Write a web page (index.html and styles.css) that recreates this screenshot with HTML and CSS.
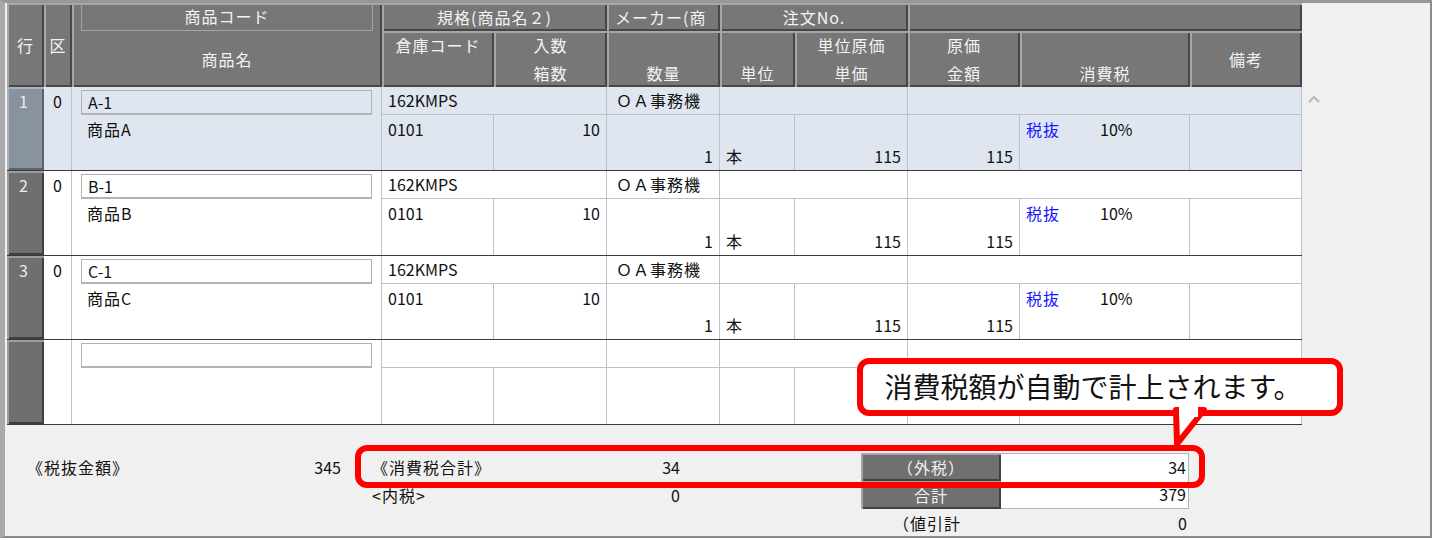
FILE: index.html
```html
<!DOCTYPE html>
<html lang="ja">
<head>
<meta charset="utf-8">
<title>売上明細</title>
<link rel="stylesheet" href="styles.css">
</head>
<body>
<div class="screen">
  <div class="frame">
    <div class="top">
      <div class="table">
        <div class="grid hdr">
          <div class="h c-gyo v-mid">行</div>
          <div class="h c-ku v-mid">区</div>
          <div class="h c-shohin"><div class="h-code">商品コード</div><div class="h-name">商品名</div></div>
          <div class="h c-kikaku">規格(商品名２)</div>
          <div class="h c-maker">メーカー(商</div>
          <div class="h c-chumon">注文No.</div>
          <div class="h c-blank"></div>
          <div class="h two"><span>倉庫コード</span><span></span></div>
          <div class="h two"><span>入数</span><span>箱数</span></div>
          <div class="h two"><span></span><span>数量</span></div>
          <div class="h two"><span></span><span>単位</span></div>
          <div class="h two"><span>単位原価</span><span>単価</span></div>
          <div class="h two"><span>原価</span><span>金額</span></div>
          <div class="h two"><span></span><span>消費税</span></div>
          <div class="h v-mid">備考</div>
        </div>

        <div class="grid row sel short">
          <div class="d-gyo">1</div>
          <div class="d-ku">0</div>
          <div class="d-shohin"><div class="code">A-1</div><div class="name">商品A</div></div>
          <div class="d sub c-kikaku">162KMPS</div>
          <div class="d sub c-maker ja">ＯＡ事務機</div>
          <div class="d sub c-chumon"></div>
          <div class="d sub c-blank"></div>
          <div class="d">0101</div>
          <div class="d right">10</div>
          <div class="d bot right">1</div>
          <div class="d bot">本</div>
          <div class="d bot right">115</div>
          <div class="d bot right">115</div>
          <div class="d tax"><span class="kb">税抜</span><span>10%</span></div>
          <div class="d"></div>
        </div>

        <div class="grid row">
          <div class="d-gyo">2</div>
          <div class="d-ku">0</div>
          <div class="d-shohin"><div class="code">B-1</div><div class="name">商品B</div></div>
          <div class="d sub c-kikaku">162KMPS</div>
          <div class="d sub c-maker ja">ＯＡ事務機</div>
          <div class="d sub c-chumon"></div>
          <div class="d sub c-blank"></div>
          <div class="d">0101</div>
          <div class="d right">10</div>
          <div class="d bot right">1</div>
          <div class="d bot">本</div>
          <div class="d bot right">115</div>
          <div class="d bot right">115</div>
          <div class="d tax"><span class="kb">税抜</span><span>10%</span></div>
          <div class="d"></div>
        </div>

        <div class="grid row short">
          <div class="d-gyo">3</div>
          <div class="d-ku">0</div>
          <div class="d-shohin"><div class="code">C-1</div><div class="name">商品C</div></div>
          <div class="d sub c-kikaku">162KMPS</div>
          <div class="d sub c-maker ja">ＯＡ事務機</div>
          <div class="d sub c-chumon"></div>
          <div class="d sub c-blank"></div>
          <div class="d">0101</div>
          <div class="d right">10</div>
          <div class="d bot right">1</div>
          <div class="d bot">本</div>
          <div class="d bot right">115</div>
          <div class="d bot right">115</div>
          <div class="d tax"><span class="kb">税抜</span><span>10%</span></div>
          <div class="d"></div>
        </div>

        <div class="grid row">
          <div class="d-gyo"></div>
          <div class="d-ku"></div>
          <div class="d-shohin"><div class="code"></div><div class="name"></div></div>
          <div class="d sub c-kikaku"></div>
          <div class="d sub c-maker"></div>
          <div class="d sub c-chumon"></div>
          <div class="d sub c-blank"></div>
          <div class="d"></div>
          <div class="d"></div>
          <div class="d"></div>
          <div class="d"></div>
          <div class="d"></div>
          <div class="d"></div>
          <div class="d"></div>
          <div class="d"></div>
        </div>
      </div>
      <div class="scroll">
        <svg class="chev-up" width="12" height="8" viewBox="0 0 12 8"><polyline points="1,7 6,2 11,7" fill="none" stroke="#b7b7b7" stroke-width="2"/></svg>
        <svg class="chev-down" width="12" height="8" viewBox="0 0 12 8"><polyline points="1,1 6,6 11,1" fill="none" stroke="#b7b7b7" stroke-width="2"/></svg>
      </div>
    </div>

    <div class="bottom">
      <div class="b-a">
        <div class="line"><span class="ja">《税抜金額》</span><span>345</span></div>
      </div>
      <div class="b-b">
        <div class="line"><span class="ja">《消費税合計》</span><span>34</span></div>
        <div class="line"><span class="ja">&lt;内税&gt;</span><span>0</span></div>
      </div>
      <div class="b-c">
        <div class="btn">（外税）</div>
        <div class="fld f1">34</div>
        <div class="btn">合計</div>
        <div class="fld f2">379</div>
        <div class="lbl">（値引計</div>
        <div class="val">0</div>
      </div>
    </div>
  </div>

  <div class="hl"></div>
  <div class="callout">消費税額が自動で計上されます。</div>
  <svg class="tail" width="60" height="56" viewBox="0 0 60 56">
    <polygon points="16,10 44,10 17,44" fill="#fff" stroke="#ff0000" stroke-width="6" stroke-linejoin="round"/>
    <rect x="19" y="3" width="19" height="14" fill="#fff"/>
  </svg>
</div>
</body>
</html>
```

FILE: styles.css
```css
* { box-sizing: border-box; }
html, body { margin: 0; padding: 0; background: #ffffff; }
body {
  font-family: "Noto Sans CJK JP", "Noto Sans", sans-serif;
  font-size: 16px;
  color: #111111;
}
.screen { position: relative; width: 1434px; height: 540px; overflow: hidden; }

.frame {
  width: 1432px;
  height: 538px;
  background: #f0f0f0;
  border-top: 3px solid #979797;
  border-right: 2px solid #8a8a8a;
  border-bottom: 2px solid #8a8a8a;
  border-left: 5px solid #a9a9a9;
  padding-left: 2px;
  display: flex;
  flex-direction: column;
}

.top { display: flex; height: 422px; }
.table { width: 1295px; }

.grid {
  display: grid;
  grid-template-columns: 37px 28px 310px 112px 113px 113px 75px 113px 112px 170px 112px;
}
.hdr { grid-template-rows: 28px 56px; }

.c-gyo { grid-column: 1; grid-row: 1 / 3; }
.c-ku { grid-column: 2; grid-row: 1 / 3; }
.c-shohin { grid-column: 3; grid-row: 1 / 3; }
.c-kikaku { grid-column: 4 / 6; grid-row: 1; }
.c-maker { grid-column: 6; grid-row: 1; }
.c-chumon { grid-column: 7 / 9; grid-row: 1; }
.c-blank { grid-column: 9 / 12; grid-row: 1; }

.h {
  background: #777777;
  color: #f3f3f3;
  letter-spacing: 1px;
  text-align: center;
  line-height: 28px;
  white-space: nowrap;
  overflow: hidden;
  box-shadow: inset 2px 2px 0 #a6a6a6, inset -2px -2px 0 #464646;
}
.h.c-maker { text-align: left; padding-left: 8px; }
.v-mid { display: flex; align-items: center; justify-content: center; }
.h.two { display: flex; flex-direction: column; }
.h.two span { height: 28px; line-height: 28px; }
.h-code {
  margin: 0 9px;
  height: 28px;
  line-height: 27px;
  border: 1px solid #a3a3a3;
  border-top: none;
}
.h-name { line-height: 56px; }

.row {
  grid-template-rows: 28px 56px;
  border-bottom: 1px solid #3a3a3a;
  background: #ffffff;
}
.row.short { grid-template-rows: 28px 55px; }
.row.sel { background: #dfe6ef; }

.d-gyo {
  grid-column: 1;
  grid-row: 1 / 3;
  background: #6f6f6f;
  color: #ececec;
  text-align: center;
  padding-right: 4px;
  line-height: 28px;
  box-shadow: inset 2px 2px 0 #9d9d9d, inset -2px -2px 0 #3f3f3f;
}
.sel .d-gyo {
  background: #8993a0;
  box-shadow: inset 2px 2px 0 #a9b1bb, inset -2px -2px 0 #5b6470;
}
.d-ku {
  grid-column: 2;
  grid-row: 1 / 3;
  text-align: center;
  line-height: 28px;
  border-right: 1px solid #bcc2cb;
}
.d-shohin {
  grid-column: 3;
  grid-row: 1 / 3;
  border-right: 1px solid #bcc2cb;
}
.code {
  margin: 3px 9px 0;
  height: 25px;
  line-height: 22px;
  padding-left: 6px;
  border: 1px solid #b0b3b8;
  border-bottom-width: 2px;
}
.name { padding-left: 15px; line-height: 28px; height: 28px; letter-spacing: 1px; }

.d {
  border-right: 1px solid #bcc2cb;
  line-height: 28px;
  padding: 0 6px;
  white-space: nowrap;
  overflow: hidden;
}
.d.sub { border-bottom: 1px solid #bcc2cb; line-height: 27px; }
.d.c-maker { padding-left: 9px; }
.ja { letter-spacing: 1px; }
.right { text-align: right; }
.bot { display: flex; align-items: flex-end; }
.bot.right { justify-content: flex-end; }
.tax { display: flex; }
.kb { color: #1414ff; width: 74px; letter-spacing: 1px; }

.scroll { flex: 1; display: flex; flex-direction: column; padding-left: 6px; }
.chev-up { margin-top: 92px; }
.chev-down { margin-top: 306px; }

.bottom { flex: 1; display: flex; padding-top: 28px; }
.line { display: flex; justify-content: space-between; height: 28px; line-height: 28px; white-space: nowrap; }
.b-a { margin-left: 20px; width: 314px; }
.b-b { margin-left: 31px; width: 308px; }
.b-c {
  margin-left: 181px;
  width: 328px;
  display: grid;
  grid-template-columns: 140px 188px;
  grid-auto-rows: 28px;
  align-content: start;
}
.btn {
  background: #707070;
  color: #f1f1f1;
  text-align: center;
  line-height: 28px;
  letter-spacing: 1px;
  box-shadow: inset 2px 2px 0 #a5a5a5, inset -2px -2px 0 #414141;
}
.fld {
  background: #ffffff;
  text-align: right;
  padding-right: 2px;
  line-height: 28px;
  border-right: 1px solid #b4b4b4;
}
.f1 { border-top: 1px solid #b4b4b4; line-height: 27px; }
.f2 { border-bottom: 1px solid #b4b4b4; line-height: 27px; }
.lbl { padding-left: 32px; line-height: 28px; letter-spacing: 1px; }
.val { text-align: right; padding-right: 2px; line-height: 28px; }

.hl {
  position: absolute;
  left: 355px;
  top: 445px;
  width: 850px;
  height: 43px;
  border: 6px solid #ff0000;
  border-radius: 12px;
}
.callout {
  position: absolute;
  left: 857px;
  top: 358px;
  width: 486px;
  height: 58px;
  border: 6px solid #ff0000;
  border-radius: 12px;
  background: #ffffff;
  color: #111111;
  font-size: 28px;
  line-height: 44px;
  text-align: center;
  padding-right: 14px;
  white-space: nowrap;
}
.tail { position: absolute; left: 1160px; top: 400px; }
```
